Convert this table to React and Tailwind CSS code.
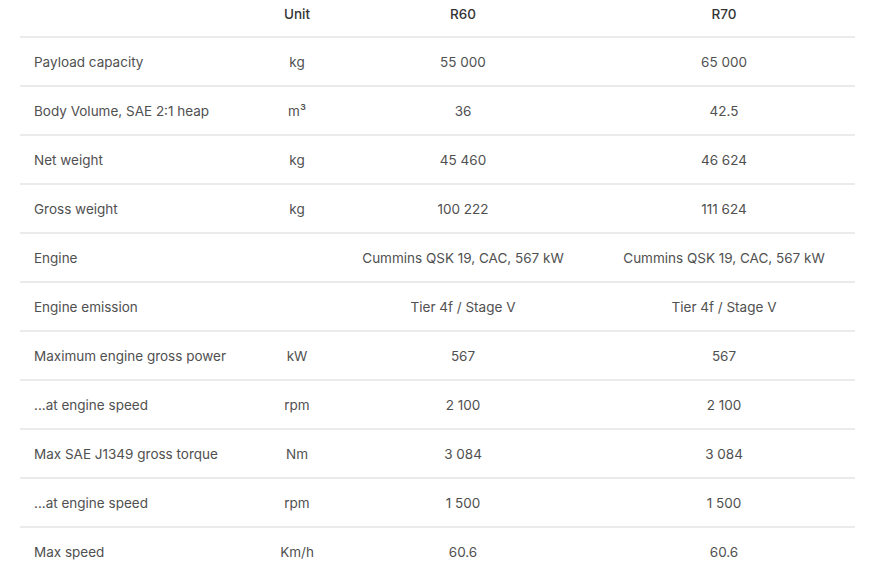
import React from "react";

const rows = [
  ["Payload capacity", "kg", "55 000", "65 000"],
  ["Body Volume, SAE 2:1 heap", "m³", "36", "42.5"],
  ["Net weight", "kg", "45 460", "46 624"],
  ["Gross weight", "kg", "100 222", "111 624"],
  ["Engine", "", "Cummins QSK 19, CAC, 567 kW", "Cummins QSK 19, CAC, 567 kW"],
  ["Engine emission", "", "Tier 4f / Stage V", "Tier 4f / Stage V"],
  ["Maximum engine gross power", "kW", "567", "567"],
  ["...at engine speed", "rpm", "2 100", "2 100"],
  ["Max SAE J1349 gross torque", "Nm", "3 084", "3 084"],
  ["...at engine speed", "rpm", "1 500", "1 500"],
  ["Max speed", "Km/h", "60.6", "60.6"],
];

export default function App() {
  return (
    <div className="w-[870px] h-[566px] overflow-hidden bg-white px-[20px]" style={{ fontFamily: "Inter, 'Noto Sans', sans-serif" }}>
      <div className="w-[835px]">
        <div className="grid grid-cols-[241px_72px_260px_262px] h-[38px] border-b-2 border-[#ebebeb] text-[13.5px] font-medium text-[#333]">
          <div></div>
          <div className="text-center pt-[4px]">Unit</div>
          <div className="text-center pt-[4px]">R60</div>
          <div className="text-center pt-[4px]">R70</div>
        </div>
        {rows.map((r, i) => (
          <div key={i} className="grid grid-cols-[241px_72px_260px_262px] h-[49px] items-center border-b-2 border-[#ebebeb] text-[13.5px] text-[#505050]">
            <div className="pl-[14px] pt-[2px]">{r[0]}</div>
            <div className="text-center pt-[2px]">{r[1]}</div>
            <div className="text-center pt-[2px]">{r[2]}</div>
            <div className="text-center pt-[2px]">{r[3]}</div>
          </div>
        ))}
      </div>
    </div>
  );
}
